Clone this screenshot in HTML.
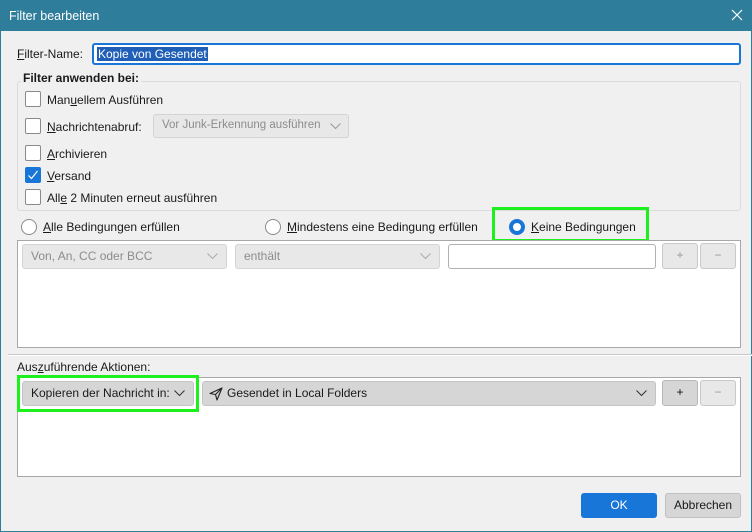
<!DOCTYPE html>
<html><head><style>
*{box-sizing:border-box;margin:0;padding:0}
body{width:752px;height:532px;background:#f0f0f0;font-family:"Liberation Sans",sans-serif;font-size:12px;color:#1a1a1a;position:relative;overflow:hidden}
.a{position:absolute}
.win{left:0;top:0;width:752px;height:532px;border:1px solid #2e7d9a;border-top:none}
.title{left:0;top:0;width:752px;height:31px;background:#2e7d9a;color:#fff;font-size:12.5px;padding:9px 0 0 9px}
.cb{width:16px;height:16px;border:1px solid #8a8a8a;background:#fff;border-radius:2px}
.dd{border:1px solid #d4d4d4;background:#e8e8e8;border-radius:3px;color:#8c8c8c;padding:4px 8px;white-space:nowrap}
.chev{position:absolute;right:8px;top:5px}
.btn{border:1px solid #c8c8c8;background:#e8e8e8;border-radius:3px;text-align:center;color:#999;line-height:22px}
u{text-decoration:underline}
.rad{width:16px;height:16px;border:1px solid #8a8a8a;border-radius:50%;background:#fff}
</style></head><body>
<div class="a win"></div>
<div class="a title">Filter bearbeiten</div>
<svg class="a" style="left:731px;top:9px" width="12" height="12"><path d="M1 1L11 11M11 1L1 11" stroke="#fff" stroke-width="1.2"/></svg>

<div class="a" style="left:17px;top:47px"><u>F</u>ilter-Name:</div>
<div class="a" style="left:92px;top:43px;width:649px;height:22px;border:2px solid #1976d9;border-radius:3px;background:#fff"><span style="position:absolute;left:3px;top:2px;background:#1f5fb8;color:#fff;padding:0 1px">Kopie von Gesendet</span></div>

<div class="a" style="left:17px;top:81px;width:724px;height:130px;border:1px solid #dcdcdc;border-radius:3px"></div>
<div class="a" style="left:21px;top:71px;background:#f0f0f0;padding:0 2px;font-weight:bold">Filter anwenden bei:</div>

<div class="a cb" style="left:25px;top:91px"></div><div class="a" style="left:47px;top:93px">Man<u>u</u>ellem Ausführen</div>
<div class="a cb" style="left:25px;top:118px"></div><div class="a" style="left:47px;top:120px"><u>N</u>achrichtenabruf:</div>
<div class="a dd" style="left:153px;top:114px;width:196px;height:24px;padding-left:8px;font-size:11.5px">Vor Junk-Erkennung ausführen<svg class="chev" width="11" height="7" style="top:8px;right:7px"><path d="M.5 .5L5.5 5.5L10.5 .5" stroke="#999" fill="none"/></svg></div>
<div class="a cb" style="left:25px;top:145px"></div><div class="a" style="left:47px;top:147px"><u>A</u>rchivieren</div>
<div class="a cb" style="left:25px;top:167px;background:#1976d9;border-color:#1976d9"><svg width="14" height="14"><path d="M2.5 7.5L5.5 10.5L11.5 3" stroke="#fff" fill="none" stroke-width="1.2"/></svg></div><div class="a" style="left:47px;top:169px"><u>V</u>ersand</div>
<div class="a cb" style="left:25px;top:189px"></div><div class="a" style="left:47px;top:191px">All<u>e</u> 2 Minuten erneut ausführen</div>

<div class="a rad" style="left:21px;top:219px"></div><div class="a" style="left:43px;top:220px"><u>A</u>lle Bedingungen erfüllen</div>
<div class="a rad" style="left:265px;top:219px"></div><div class="a" style="left:287px;top:220px"><u>M</u>indestens eine Bedingung erfüllen</div>
<div class="a" style="left:492px;top:207px;width:157px;height:35px;border:3px solid #1ef01e"></div>
<div class="a rad" style="left:509px;top:219px;border:4px solid #1976d9"></div><div class="a" style="left:531px;top:220px"><u>K</u>eine Bedingungen</div>

<div class="a" style="left:17px;top:240px;width:724px;height:108px;background:#fff;border:1px solid #a8a8a8"></div>
<div class="a dd" style="left:22px;top:244px;width:205px;height:25px">Von, An, CC oder BCC<svg class="chev" width="11" height="7" style="top:8px"><path d="M.5 .5L5.5 5.5L10.5 .5" stroke="#aaa" fill="none"/></svg></div>
<div class="a dd" style="left:235px;top:244px;width:205px;height:25px">enthält<svg class="chev" width="11" height="7" style="top:8px"><path d="M.5 .5L5.5 5.5L10.5 .5" stroke="#aaa" fill="none"/></svg></div>
<div class="a" style="left:448px;top:244px;width:208px;height:25px;border:1px solid #b0b0b0;border-radius:3px;background:#fff"></div>
<div class="a btn" style="left:662px;top:243px;width:36px;height:26px">+</div>
<div class="a btn" style="left:700px;top:243px;width:36px;height:26px">−</div>

<div class="a" style="left:8px;top:354px;width:744px;height:1px;background:#c8c8c8"></div>
<div class="a" style="left:8px;top:355px;width:744px;height:1px;background:#fff"></div>
<div class="a" style="left:17px;top:360px">Aus<u>z</u>uführende Aktionen:</div>

<div class="a" style="left:17px;top:377px;width:724px;height:100px;background:#fff;border:1px solid #a8a8a8"></div>
<div class="a dd" style="left:22px;top:381px;width:172px;height:25px;background:#d6d6d6;border-color:#c4c4c4;color:#1a1a1a">Kopieren der Nachricht in:<svg class="chev" width="11" height="7" style="top:8px"><path d="M.5 .5L5.5 5.5L10.5 .5" stroke="#333" fill="none"/></svg></div>
<div class="a" style="left:17px;top:375px;width:182px;height:37px;border:3px solid #1ef01e"></div>
<div class="a dd" style="left:202px;top:381px;width:454px;height:25px;background:#d6d6d6;border-color:#c4c4c4;color:#1a1a1a;padding-left:24px"><svg style="position:absolute;left:6px;top:5px" width="14" height="14"><path d="M1 6.5L13 1L8 13L6.5 7.5Z M6.5 7.5L13 1" stroke="#222" fill="none" stroke-width="1.1" stroke-linejoin="round"/></svg>Gesendet in Local Folders<svg class="chev" width="11" height="7" style="top:8px"><path d="M.5 .5L5.5 5.5L10.5 .5" stroke="#333" fill="none"/></svg></div>
<div class="a btn" style="left:662px;top:380px;width:36px;height:26px;background:#d6d6d6;border-color:#b8b8b8;color:#111">+</div>
<div class="a btn" style="left:700px;top:380px;width:36px;height:26px">−</div>

<div class="a" style="left:581px;top:493px;width:76px;height:25px;background:#1976d9;border-radius:3px;color:#fff;text-align:center;line-height:25px">OK</div>
<div class="a" style="left:665px;top:493px;width:76px;height:25px;background:#d6d6d6;border:1px solid #c0c0c0;border-radius:3px;text-align:center;line-height:23px">Abbrechen</div>
</body></html>
